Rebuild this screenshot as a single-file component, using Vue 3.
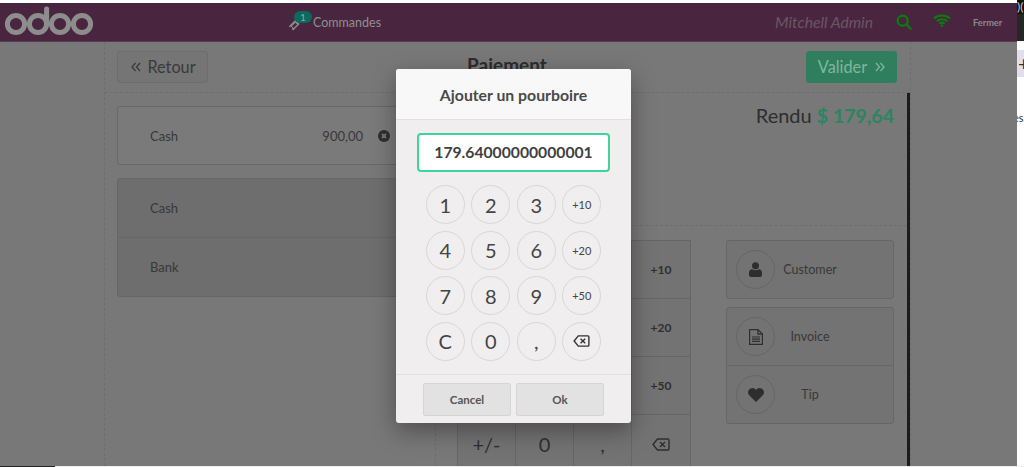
<template>
  <div class="page">
    <div class="stage">
      <div class="pos">
        <header class="nav">
          <svg class="logo" width="96" height="38" viewBox="0 0 96 38" fill="none" stroke="#8d8d8d" stroke-width="5">
            <circle cx="16" cy="21" r="8.600" />
            <circle cx="38" cy="21" r="8.600" />
            <path d="M46.600 21V6" stroke-linecap="round" />
            <circle cx="60" cy="21" r="8.600" />
            <circle cx="82" cy="21" r="8.600" />
          </svg>
          <div class="orders">
            <svg class="ticket" width="13" height="13" viewBox="0 0 15 15">
              <path d="M1 9.500 8.500 2l5 5-7.500 7.500-1.600-1.600a1.600 1.600 0 0 0-2.300-2.300z" fill="#8a8a8a" />
              <path d="M4.500 9.500 8.500 5.500l2 2-4 4z" fill="#4a2540" />
            </svg>
            <span class="badge">1</span>
            <span>Commandes</span>
          </div>
          <span class="cashier">Mitchell Admin</span>
          <svg class="search" width="16" height="16" viewBox="0 0 16 16" fill="none" stroke="#0a7d0a" stroke-width="2.200">
            <circle cx="6.700" cy="6.700" r="5" />
            <path d="m10.400 10.400 4.300 4.300" stroke-linecap="round" />
          </svg>
          <svg class="wifi" width="18" height="13" viewBox="0 0 18 13" fill="none" stroke="#0a7d0a" stroke-width="2">
            <path d="M1 4.500C5.500.5 12.500.5 17 4.500" />
            <path d="M3.700 7.200c3-2.600 7.600-2.600 10.600 0" />
            <path d="M6.300 9.700c1.600-1.300 3.800-1.300 5.400 0" />
            <circle cx="9" cy="11.700" r="1.200" fill="#0a7d0a" stroke="none" />
          </svg>
          <span class="close">Fermer</span>
        </header>

        <main class="content">
          <div class="head">
            <button class="top-btn">
              <svg class="chev" width="10" height="10" viewBox="0 0 10 10" fill="none" stroke="currentColor" stroke-width="1.300">
                <path d="M4.500 1 1 5l3.500 4M9 1 5.500 5 9 9" />
              </svg>
              <span>Retour</span>
            </button>
            <h1>Paiement</h1>
            <button class="top-btn next">
              <span>Valider</span>
              <svg class="chev" width="10" height="10" viewBox="0 0 10 10" fill="none" stroke="currentColor" stroke-width="1.300">
                <path d="M1 1l3.500 4L1 9M5.500 1 9 5 5.500 9" />
              </svg>
            </button>
          </div>
          <div class="body">
            <section class="left">
              <div class="line-box">
                <span class="line-name">Cash</span>
                <span class="line-amount">900,00</span>
                <svg class="line-del" width="12" height="12" viewBox="0 0 11 11">
                  <circle cx="5.500" cy="5.500" r="5.500" fill="#2e2e2e" />
                  <path d="m3.600 3.600 3.800 3.800m0-3.800L3.600 7.400" stroke="#7a7a7a" stroke-width="1.600" />
                </svg>
              </div>
              <div class="methods">
                <div v-for="m in methods" :key="m" class="method">{{ m }}</div>
              </div>
            </section>
            <section class="right">
              <div class="summary">
                Rendu <span class="change">$ 179,64</span>
              </div>
              <div class="lower">
                <div class="numpad">
                  <div v-for="k in padKeys" :key="k" class="pad-key" :class="{ small: k.startsWith('+') && k !== '+/-' }">
                    <svg v-if="k === 'del'" width="18" height="13" viewBox="0 0 18 13" fill="none" stroke="#2e2e2e" stroke-width="1.400">
                      <path d="M5.500 1H16a1 1 0 0 1 1 1v9a1 1 0 0 1-1 1H5.500L1 6.500z" />
                      <path d="m8 4 5 5m0-5-5 5" />
                    </svg>
                    <template v-else>{{ k }}</template>
                  </div>
                </div>
                <div class="actions">
                  <div class="action-box">
                    <div class="action">
                      <span class="ring">
                        <svg width="13" height="15" viewBox="0 0 13 15" fill="#2e2e2e">
                          <circle cx="6.500" cy="3.800" r="3.500" />
                          <path d="M0 13V10.500C0 8.500 1.500 7.500 3 7.300c2 1.200 5 1.200 7 0 1.500.2 3 1.200 3 3.200V13a2 2 0 0 1-2 2H2a2 2 0 0 1-2-2z" />
                        </svg>
                      </span>
                      <span class="action-label">Customer</span>
                    </div>
                  </div>
                  <div class="action-box">
                    <div class="action">
                      <span class="ring">
                        <svg width="14" height="16" viewBox="0 0 14 16" fill="none" stroke="#2e2e2e" stroke-width="1.200">
                          <path d="M.6.6h8.300l4.500 4.500v10.300H.6z" />
                          <path d="M8.900.6v4.500h4.500" />
                          <path d="M3 8h8M3 10.200h8M3 12.400h8" />
                        </svg>
                      </span>
                      <span class="action-label">Invoice</span>
                    </div>
                    <div class="action">
                      <span class="ring">
                        <svg width="16" height="14" viewBox="0 0 16 14" fill="#2e2e2e">
                          <path d="M8 14 1.200 7.200A4.300 4.300 0 0 1 4.400 0C6 0 7.200.8 8 2c.8-1.200 2-2 3.600-2a4.300 4.300 0 0 1 3.200 7.200z" />
                        </svg>
                      </span>
                      <span class="action-label">Tip</span>
                    </div>
                  </div>
                </div>
              </div>
            </section>
          </div>
        </main>
      </div>

      <aside class="sliver">
        <div class="sl-dark"><span>)(</span></div>
        <div class="sl-tab">+</div>
        <div class="sl-white"><span>es</span></div>
      </aside>
    </div>
    <div class="bottom"><span class="task"></span></div>

    <div class="modal">
      <div class="modal-title">Ajouter un pourboire</div>
      <div class="modal-body">
        <div class="tip-input">179.64000000000001</div>
        <div class="modal-pad">
          <div v-for="k in modalKeys" :key="k" class="circle" :class="{ small: k.startsWith('+') }">
            <svg v-if="k === 'del'" width="17" height="12" viewBox="0 0 18 13" fill="none" stroke="#333" stroke-width="1.500">
              <path d="M5.500 1H16a1 1 0 0 1 1 1v9a1 1 0 0 1-1 1H5.500L1 6.500z" />
              <path d="m8 4 5 5m0-5-5 5" />
            </svg>
            <template v-else>{{ k }}</template>
          </div>
        </div>
      </div>
      <div class="modal-foot">
        <button class="foot-btn">Cancel</button>
        <button class="foot-btn">Ok</button>
      </div>
    </div>
  </div>
</template>

<script setup>
const methods = ['Cash', 'Bank']
const padKeys = ['1', '2', '3', '+10', '4', '5', '6', '+20', '7', '8', '9', '+50', '+/-', '0', ',', 'del']
const modalKeys = ['1', '2', '3', '+10', '4', '5', '6', '+20', '7', '8', '9', '+50', 'C', '0', ',', 'del']
</script>

<style>
body {
  overflow: hidden;
  background: #fff;
}
</style>

<style scoped>
.page {
  position: relative;
  width: 1024px;
  height: 467px;
  display: flex;
  flex-direction: column;
  padding-top: 3px;
  box-sizing: border-box;
  overflow: hidden;
  background: #fff;
  font-family: Lato, "Open Sans", sans-serif;
  color: #333;
}

.stage {
  flex: 1;
  min-height: 0;
  display: flex;
}

.pos {
  width: 1017px;
  display: flex;
  flex-direction: column;
  background: #787878;
}

.nav {
  height: 38px;
  flex: none;
  display: flex;
  align-items: center;
  background: #4a2540;
  border-bottom: 1px solid #5b3a52;
  color: #8f8f8f;
}

.logo {
  flex: none;
}

.orders {
  display: flex;
  align-items: center;
  margin-left: 192px;
  font-size: 12.5px;
}

.ticket {
  margin-top: 4px;
}

.badge {
  width: 18px;
  height: 12px;
  margin: -10px 1px 0 -7px;
  border-radius: 6px;
  background: #0b6a5e;
  color: #8fa8a4;
  font-size: 10px;
  line-height: 12px;
  text-align: center;
}

.cashier {
  margin-left: 394px;
  font-size: 15.7px;
  font-style: italic;
  color: #6b5665;
}

.search {
  margin-left: 23px;
}

.wifi {
  margin-left: 21px;
  margin-top: -3px;
}

.close {
  margin-left: 22px;
  font-size: 9.2px;
  font-weight: 700;
  color: #8a8a8a;
}

.content {
  flex: 1;
  min-height: 0;
  width: 807px;
  margin-left: 104px;
  display: flex;
  flex-direction: column;
  box-sizing: border-box;
  border-left: 1px dashed #6e6e6e;
  border-right: 1px dashed #6e6e6e;
}

.head {
  height: 51px;
  flex: none;
  box-sizing: border-box;
  padding: 9px 13px 0 12px;
  display: flex;
  justify-content: space-between;
  border-bottom: 1px dashed #6e6e6e;
}

.head h1 {
  margin: 2px 0 0;
  font-size: 19px;
  font-weight: 700;
  color: #2c2c2c;
  line-height: 24px;
}

.top-btn {
  width: 91px;
  height: 32px;
  padding: 0 0 2px;
  box-sizing: border-box;
  display: flex;
  align-items: center;
  justify-content: center;
  gap: 6px;
  border: 1px solid #6d6d6d;
  border-radius: 3px;
  background: #757575;
  font-family: inherit;
  font-size: 16.3px;
  color: #3a3a3a;
}

.top-btn:first-child {
  padding-left: 2px;
}

.top-btn.next {
  gap: 8px;
  background: #2f7e5e;
  border-color: #2f7e5e;
  color: #7fb69e;
}

.chev {
  margin-top: 2px;
}

.body {
  flex: 1;
  min-height: 0;
  display: flex;
}

.left {
  width: 331px;
  flex: none;
  box-sizing: border-box;
  padding: 13px 0 0 12px;
  border-right: 1px dashed #6e6e6e;
}

.line-box {
  width: 290px;
  height: 59px;
  box-sizing: border-box;
  padding: 0 16px 0 32px;
  display: flex;
  align-items: center;
  border: 1px solid #686868;
  border-radius: 3px;
  background: #7a7a7a;
  font-size: 13px;
  color: #383838;
}

.line-name {
  flex: 1;
}

.line-del {
  margin-left: 15px;
}

.methods {
  width: 290px;
  margin-top: 13px;
  box-sizing: border-box;
  border: 1px solid #666;
  border-radius: 3px;
  background: #6e6e6e;
}

.method {
  height: 58px;
  padding-left: 32px;
  display: flex;
  align-items: center;
  font-size: 13px;
  color: #383838;
}

.method + .method {
  border-top: 1px solid #666;
}

.right {
  width: 471px;
  flex: none;
  display: flex;
  flex-direction: column;
  border-right: 3px solid #1c1c1c;
}

.summary {
  height: 133px;
  flex: none;
  box-sizing: border-box;
  padding: 8px 13px 0 0;
  text-align: right;
  font-size: 20px;
  line-height: 28px;
  color: #2e2e2e;
  border-bottom: 1px dashed #6e6e6e;
}

.change {
  font-size: 19.5px;
  font-weight: 700;
  color: #2b8560;
}

.lower {
  flex: 1;
  min-height: 0;
  overflow: hidden;
  padding: 14px 13px 0 21px;
  display: flex;
  justify-content: space-between;
}

.numpad {
  width: 234px;
  height: 234px;
  flex: none;
  box-sizing: border-box;
  display: grid;
  grid-template-columns: repeat(4, 1fr);
  grid-template-rows: repeat(4, 1fr);
  border: 1px solid #666;
  background: #737373;
}

.pad-key {
  display: flex;
  align-items: center;
  justify-content: center;
  font-size: 20px;
  color: #2f2f2f;
  border-right: 1px solid #666;
  border-bottom: 1px solid #666;
}

.pad-key.small {
  font-size: 12px;
  font-weight: 700;
}

.pad-key:nth-child(4n) {
  border-right: 0;
}

.pad-key:nth-last-child(-n + 4) {
  border-bottom: 0;
}

.actions {
  width: 168px;
  display: flex;
  flex-direction: column;
  gap: 8px;
}

.action-box {
  box-sizing: border-box;
  border: 1px solid #666;
  border-radius: 3px;
  background: #737373;
}

.action {
  height: 57px;
  box-sizing: border-box;
  padding-left: 9px;
  display: flex;
  align-items: center;
}

.action + .action {
  height: 58px;
  border-top: 1px solid #666;
}

.ring {
  width: 39px;
  height: 39px;
  flex: none;
  box-sizing: border-box;
  display: flex;
  align-items: center;
  justify-content: center;
  border: 1px solid #666;
  border-radius: 50%;
}

.action-label {
  width: 70px;
  text-align: center;
  font-size: 12.5px;
  color: #383838;
}

.sliver {
  width: 7px;
  flex: none;
  margin-top: -3px;
  display: flex;
  flex-direction: column;
  overflow: hidden;
  background: #fff;
  font-size: 12px;
  color: #333;
}

.sl-dark {
  height: 41px;
  flex: none;
  background: linear-gradient(#111 14px, #262626 14px);
  color: #ccc;
  line-height: 14px;
  white-space: nowrap;
}

.sl-tab {
  height: 27px;
  flex: none;
  margin-top: 9px;
  background: #dfe0ea;
  font-size: 20px;
  line-height: 26px;
  text-indent: 1px;
}

.sl-white {
  padding-top: 34px;
  text-indent: -4px;
  font-size: 11px;
  white-space: nowrap;
}

.bottom {
  height: 1px;
  flex: none;
  background: #eee;
}

.task {
  display: block;
  width: 55px;
  height: 1px;
  background: #222;
}

.modal {
  position: absolute;
  left: 396px;
  top: 69px;
  width: 235px;
  height: 354px;
  display: flex;
  flex-direction: column;
  border-radius: 3px;
  background: #f0eeee;
  box-shadow: 0 8px 24px rgba(0, 0, 0, 0.35);
}

.modal-title {
  height: 50px;
  flex: none;
  display: flex;
  align-items: center;
  justify-content: center;
  border-bottom: 1px solid #e2e0e0;
  border-radius: 3px 3px 0 0;
  background: #f8f8f8;
  font-size: 15.8px;
  font-weight: 700;
  color: #4a4a4a;
}

.modal-body {
  flex: 1;
  padding-top: 13px;
  display: flex;
  flex-direction: column;
  align-items: center;
}

.tip-input {
  width: 193px;
  height: 39px;
  box-sizing: border-box;
  border: 2px solid #3fd49a;
  border-radius: 4px;
  background: #fff;
  text-align: center;
  font-size: 15.7px;
  font-weight: 700;
  line-height: 35px;
  color: #3f3f3f;
}

.modal-pad {
  margin-top: 13px;
  display: grid;
  grid-template-columns: repeat(4, 39px);
  grid-auto-rows: 39px;
  gap: 6.5px;
}

.circle {
  display: flex;
  align-items: center;
  justify-content: center;
  box-sizing: border-box;
  border: 1px solid #d8d6d6;
  border-radius: 50%;
  font-size: 20px;
  color: #444;
}

.circle.small {
  font-size: 11px;
}

.modal-foot {
  height: 49px;
  flex: none;
  box-sizing: border-box;
  padding-top: 8px;
  display: flex;
  justify-content: center;
  gap: 5px;
  border-top: 1px solid #e2e0e0;
}

.foot-btn {
  width: 88px;
  height: 33px;
  padding: 0;
  border: 1px solid #d6d4d4;
  border-radius: 2px;
  background: #e2e2e2;
  font-family: inherit;
  font-size: 11.5px;
  font-weight: 700;
  color: #555;
}
</style>
